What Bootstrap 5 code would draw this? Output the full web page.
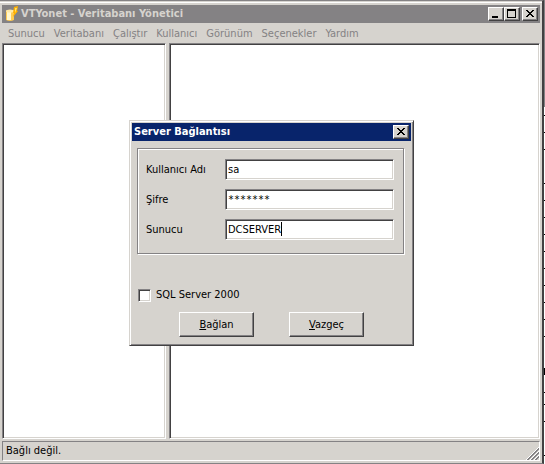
<!DOCTYPE html>
<html lang="tr">
<head>
<meta charset="utf-8">
<meta name="viewport" content="width=device-width, initial-scale=1">
<title>VTYonet - Veritabanı Yönetici</title>
<link href="https://cdn.jsdelivr.net/npm/bootstrap@5.3.0/dist/css/bootstrap.min.css" rel="stylesheet">
<style>
:root{--face:#d6d3ce;--shade:#848284;--dark:#424142}
body{font-family:Tahoma,"DejaVu Sans Condensed","DejaVu Sans",sans-serif;font-size:11px;line-height:14px;color:#000;background:#fff}
.desk-edge{width:1px;background:
 linear-gradient(#000,#000) 0 115px/1px 1px no-repeat,linear-gradient(#000,#000) 0 132px/1px 1px no-repeat,
 linear-gradient(#000,#000) 0 149px/1px 1px no-repeat,linear-gradient(#000,#000) 0 368px/1px 7px no-repeat,
 linear-gradient(#000,#000) 0 392px/1px 1px no-repeat,linear-gradient(#000,#000) 0 404px/1px 1px no-repeat,
 linear-gradient(#000,#000) 0 421px/1px 1px no-repeat,linear-gradient(#000,#000) 0 455px/1px 1px no-repeat,
 repeating-linear-gradient(#000 0 1px,transparent 1px 17px) 0 183px/1px 154px no-repeat,
 linear-gradient(#848284,#848284) 0 0/1px 107px no-repeat #fff}
.app-window{background:var(--face);border-top:1px solid var(--shade);border-right:2px solid var(--dark);border-bottom:1px solid var(--shade)}
.app-frame{border-top:1px solid var(--face);padding:0 2px 2px}
.app-frame::before{content:"";height:1px;margin:0 -2px 2px;background:#fff}
.titlebar{height:18px;padding:0 2px 0 3px;color:var(--face);background:var(--shade)}
.titlebar h1{font-size:11px;line-height:18px;font-weight:700}
.titlebar.active{color:#fff;background:#08246b;padding-left:2px}
.cap{width:16px;height:14px;background:var(--face);border:1px solid;border-color:#fff var(--dark) var(--dark) #fff;box-shadow:inset -1px -1px var(--shade)}
.cap-close{margin-left:2px}
.title-text{padding-left:2px}
.menu-row{height:20px;padding:2px 0 0 6px;gap:9px}
.menu-row a{color:var(--shade);text-decoration:none}
.pane{background:#fff;border:1px solid;border-color:var(--shade) #fff #fff var(--shade);box-shadow:inset 1px 1px var(--dark),inset -1px -1px var(--face)}
.tree{flex:0 0 164px}
.panes{gap:3px}
.status{height:20px;margin-top:2px;padding-left:3px;border:1px solid;border-color:var(--shade) #fff #fff var(--shade)}
.overlay{padding:2px 0 0 1px}
.login{width:285px;background:var(--face);border:1px solid;border-color:var(--face) var(--dark) var(--dark) var(--face);box-shadow:inset 1px 1px #fff,inset -1px -1px var(--shade);padding:2px}
.group{margin:7px 7px 0 5px;padding:10px 9px 13px 8px;border:1px solid var(--shade);box-shadow:1px 1px #fff,inset 1px 1px #fff;display:grid;grid-template-columns:79px 1fr;row-gap:9px;align-items:center}
.field{width:100%;height:21px;border:1px solid;border-color:var(--shade) #fff #fff var(--shade);box-shadow:inset 1px 1px var(--dark),inset -1px -1px var(--face);border-radius:0;padding:0 2px;outline:0;background:#fff;color:#000}
.secret{font-family:"DejaVu Sans Mono",monospace;font-size:10px}
.caret{left:56px;top:3px;width:1px;height:14px;background:#000}
.tick{appearance:none;width:13px;height:13px;margin:0;background:#fff;border:1px solid;border-color:var(--shade) #fff #fff var(--shade);box-shadow:inset 1px 1px var(--dark),inset -1px -1px var(--face)}
.option{margin:34px 6px 0;gap:5px}
.actions{gap:35px;padding:10px 0 6px}
.push{width:75px;height:25px;background:var(--face);border:1px solid;border-color:#fff var(--dark) var(--dark) #fff;box-shadow:inset -1px -1px var(--shade);color:#000;padding:0}
</style>
<script src="https://cdn.jsdelivr.net/npm/bootstrap@5.3.0/dist/js/bootstrap.bundle.min.js"></script>
</head>
<body class="d-flex vh-100 overflow-hidden">
<main class="app-window position-relative flex-grow-1 d-flex flex-column">
 <div class="app-frame flex-grow-1 d-flex flex-column">
  <header class="titlebar d-flex align-items-center">
   <svg width="14" height="16" viewBox="0 0 14 16" aria-hidden="true">
    <path d="M1 5q4-2 8 0v9q-4 2-8 0z" fill="#ffcb52"/><path d="M2 6h4v8H2z" fill="#fff7cf"/><ellipse cx="5" cy="5" rx="4" ry="1.500" fill="#ffe9a8"/>
    <path d="M9 1l4-1-1 5h1l-5 6 1-4H8z" fill="#ffb000"/><path d="M10 2h2l-2 5z" fill="#ffe36b"/>
   </svg>
   <h1 class="title-text mb-0 flex-grow-1 text-nowrap">VTYonet - Veritabanı Yönetici</h1>
   <button class="cap p-0 d-flex" aria-label="Küçült"><svg width="14" height="12"><path d="M3 8h6v2H3z"/></svg></button>
   <button class="cap p-0 d-flex" aria-label="Büyüt"><svg width="14" height="12"><path d="M2 1h9v9H2zM3 3v6h7V3z" fill-rule="evenodd"/></svg></button>
   <button class="cap cap-close p-0 d-flex" aria-label="Kapat"><svg width="14" height="12" shape-rendering="crispEdges"><path d="M3 2h2v1h1v1h2V3h1V2h2v1h-1v1H9v1H8v1h1v1h1v1h1v1H9V8H8V7H6v1H5v1H3V8h1V7h1V6h1V5H5V4H4V3H3z"/></svg></button>
  </header>
  <nav class="menu-row d-flex align-items-center">
   <a href="#">Sunucu</a><a href="#">Veritabanı</a><a href="#">Çalıştır</a><a href="#">Kullanıcı</a><a href="#">Görünüm</a><a href="#">Seçenekler</a><a href="#">Yardım</a>
  </nav>
  <div class="panes d-flex flex-grow-1">
   <section class="pane tree"></section>
   <section class="pane flex-grow-1"></section>
  </div>
  <footer class="status d-flex align-items-center justify-content-between">
   <span>Bağlı değil.</span>
   <svg class="align-self-end" width="13" height="13"><path d="M0 13L13 0M4 13l9-9M8 13l5-5" stroke="#fff"/><path d="M1 13L13 1M2 13L13 2M5 13l8-8M6 13l7-7M9 13l4-4M10 13l3-3" stroke="#848284"/></svg>
  </footer>
 </div>
 <div class="overlay position-absolute top-0 start-0 w-100 h-100 d-flex align-items-center justify-content-center">
  <form class="login" role="dialog" aria-labelledby="dlg">
   <div class="titlebar active d-flex align-items-center">
    <h1 id="dlg" class="mb-0 flex-grow-1">Server Bağlantısı</h1>
    <button type="button" class="cap p-0 d-flex" aria-label="Kapat"><svg width="14" height="12" shape-rendering="crispEdges"><path d="M3 2h2v1h1v1h2V3h1V2h2v1h-1v1H9v1H8v1h1v1h1v1h1v1H9V8H8V7H6v1H5v1H3V8h1V7h1V6h1V5H5V4H4V3H3z"/></svg></button>
   </div>
   <div class="group">
    <label for="user">Kullanıcı Adı</label><input class="field" id="user" type="text" value="sa">
    <label for="pass">Şifre</label><input class="field secret" id="pass" type="text" value="*******">
    <label for="host">Sunucu</label><div class="position-relative d-flex"><input class="field" id="host" type="text" value="DCSERVER"><span class="caret position-absolute"></span></div>
   </div>
   <div class="option d-flex align-items-center"><input class="tick" id="sql" type="checkbox"><label for="sql">SQL Server 2000</label></div>
   <div class="actions d-flex justify-content-center">
    <button type="button" class="push"><u>B</u>ağlan</button>
    <button type="button" class="push"><u>V</u>azgeç</button>
   </div>
  </form>
 </div>
</main>
<div class="desk-edge"></div>
</body>
</html>
